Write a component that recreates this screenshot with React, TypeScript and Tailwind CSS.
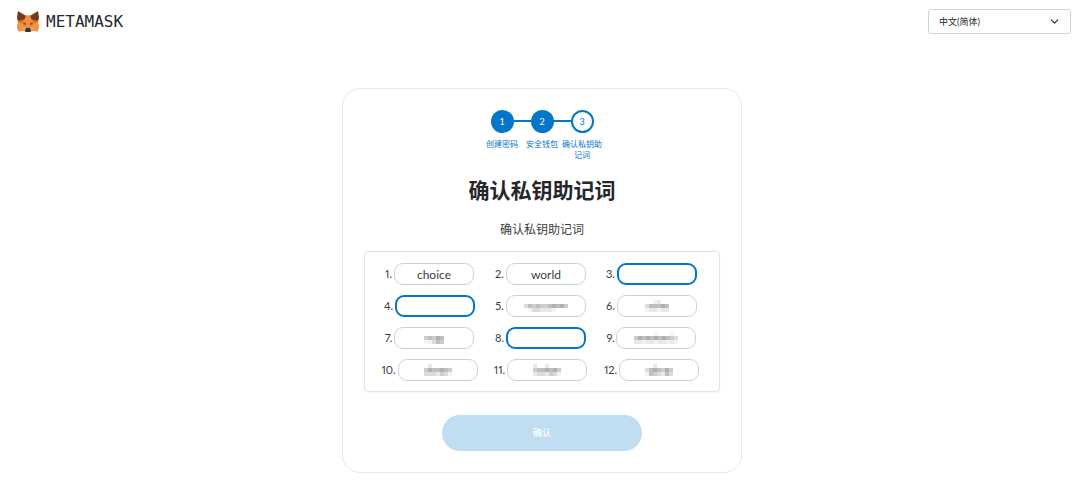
import { ChevronDown } from "lucide-react";

type Cell = { kind: "word"; text: string } | { kind: "blank" } | { kind: "hidden"; rows: string[] };

/* Masked words are mosaics: each digit is the darkness of one block, 0 is clear. */
const CELLS: Cell[] = [
  { kind: "word", text: "choice" },
  { kind: "word", text: "world" },
  { kind: "blank" },
  { kind: "blank" },
  { kind: "hidden", rows: ["00000000000", "35454456564", "01332221000"] },
  { kind: "hidden", rows: ["001200", "355565", "122122"] },
  { kind: "hidden", rows: ["00000", "45465", "11354"] },
  { kind: "blank" },
  { kind: "hidden", rows: ["00000100010", "46565656543", "22122122121"] },
  { kind: "hidden", rows: ["0200000", "4655654", "3332431"] },
  { kind: "hidden", rows: ["2002000", "4556564", "2332431"] },
  { kind: "hidden", rows: ["0020000", "3565464", "1543253"] },
];

const FILLS = ["none", "#f3f3f3", "#e8e8e8", "#dbdbdb", "#cdcdcd", "#bfbfbf", "#b0b0b0"];

function Mosaic({ rows }: { rows: string[] }) {
  const width = rows[0].length * 4;
  return (
    <svg width={width} height={12} viewBox={`0 0 ${width} 12`} aria-hidden="true">
      {rows.map((row, y) =>
        [...row].map((level, x) => (
          <rect key={`${x}-${y}`} x={x * 4} y={y * 4} width={4} height={4} fill={FILLS[Number(level)]} />
        )),
      )}
    </svg>
  );
}

function Fox() {
  return (
    <svg width="22" height="21" viewBox="0 0 44 42" aria-hidden="true">
      <path d="M2 1 17 9H27L42 1 44 15 42 24 44 32 41 41 32 39 27 42H17L12 39 3 41 0 32 2 24 0 15Z" fill="#ee8430" />
      <path d="M2 0 18 10 15 17 3 20 0 13ZM42 0 26 10 29 17 41 20 44 13Z" fill="#713d20" />
      <path d="M18 9H26L29 17 25 33H19L15 17Z" fill="#f0903f" />
      <path d="M3 20 15 17 8 25ZM41 20 29 17 36 25Z" fill="#dd6a20" />
      <path d="M0 32 2 24H12L12 39 3 41ZM44 32 42 24H32L32 39 41 41Z" fill="#f29440" />
      <path d="M12 31 19 34 17 41 12 39ZM32 31 25 34 27 41 32 39Z" fill="#d6a98a" />
      <path d="M11 25 17 23 18 28ZM33 25 27 23 26 28Z" fill="#7a4a34" />
      <path d="M18 34H26L28 39 26 42H18L16 39Z" fill="#3a3436" />
    </svg>
  );
}

function Step({ n, label, current }: { n: number; label: string; current?: boolean }) {
  return (
    <li className="relative flex w-10 flex-col items-center">
      {n > 1 && <span className="absolute right-[31px] top-[10px] h-0.5 w-[18px] bg-[#0376c9]" />}
      <span
        className={
          current
            ? "flex size-[23px] items-center justify-center rounded-full border-2 border-[#0376c9] text-[9px] text-[#0376c9]"
            : "flex size-[23px] items-center justify-center rounded-full bg-[#0376c9] text-[9px] text-white"
        }
      >
        {n}
      </span>
      <span className="mt-[6px] text-center text-[8px] leading-[11px] text-[#0376c9]">{label}</span>
    </li>
  );
}

function WordCell({ n, cell }: { n: number; cell: Cell }) {
  const id = `word-${n}`;
  const pill = "h-[22px] w-20 rounded-[9px] bg-transparent text-center text-[12px] text-[#3a3d40] outline-none";
  return (
    <div className="flex items-center justify-center gap-[2px]">
      <label htmlFor={id} className="text-[11px] proportional-nums text-[#3a3d40]">
        {n}.
      </label>
      <div className="relative flex">
        <input
          id={id}
          type="text"
          readOnly={cell.kind !== "blank"}
          defaultValue={cell.kind === "word" ? cell.text : ""}
          className={cell.kind === "blank" ? `${pill} border-2 border-[#0376c9]` : `${pill} border border-[#cfd2d5]`}
        />
        {cell.kind === "hidden" && (
          <span className="pointer-events-none absolute inset-0 flex items-center justify-center">
            <Mosaic rows={cell.rows} />
          </span>
        )}
      </div>
    </div>
  );
}

export default function App() {
  return (
    <div className="min-h-screen bg-white font-['Lato','Noto_Sans_CJK_SC',sans-serif] text-[#24272a]">
      <header className="flex items-center justify-between pl-[17px] pr-[9px] pt-[9px]">
        <a href="#" className="flex items-center gap-[7px]">
          <Fox />
          <span className="font-['DejaVu_Sans_Mono',monospace] text-[16px] leading-6 text-[#24272a]">
            METAMASK
          </span>
        </a>
        <div className="relative flex">
          <select
            aria-label="语言"
            className="h-[25px] w-[143px] appearance-none rounded-[3px] border border-[#cfd3d7] bg-white pl-[10px] text-[9px] text-[#24272a]"
          >
            <option>中文(简体)</option>
          </select>
          <ChevronDown className="pointer-events-none absolute right-[10px] top-[6px] size-[13px]" strokeWidth={2} />
        </div>
      </header>

      <main className="flex justify-center pb-3 pl-1 pt-[54px]">
        <section className="flex w-[400px] flex-col items-center rounded-[18px] border border-[#e6e8ea] px-[21px] py-[21px]">
          <ol className="flex">
            <Step n={1} label="创建密码" />
            <Step n={2} label="安全钱包" />
            <Step n={3} label="确认私钥助记词" current />
          </ol>
          <h1 className="mt-[13px] text-[21px] font-bold leading-8">确认私钥助记词</h1>
          <p className="mt-[15px] text-[12px] leading-[18px] text-[#3a3d40]">确认私钥助记词</p>
          <div className="mt-3 grid w-full grid-cols-3 gap-y-[10px] rounded-[4px] border border-[#e2e4e6] pb-[10px] pl-[9px] pr-3 pt-[11px] shadow-xs">
            {CELLS.map((cell, i) => (
              <WordCell key={i} n={i + 1} cell={cell} />
            ))}
          </div>
          <button
            type="button"
            disabled
            className="mt-[23px] h-9 w-[200px] rounded-full bg-[#c0def2] pb-px text-[9px] font-medium text-white"
          >
            确认
          </button>
        </section>
      </main>
    </div>
  );
}
